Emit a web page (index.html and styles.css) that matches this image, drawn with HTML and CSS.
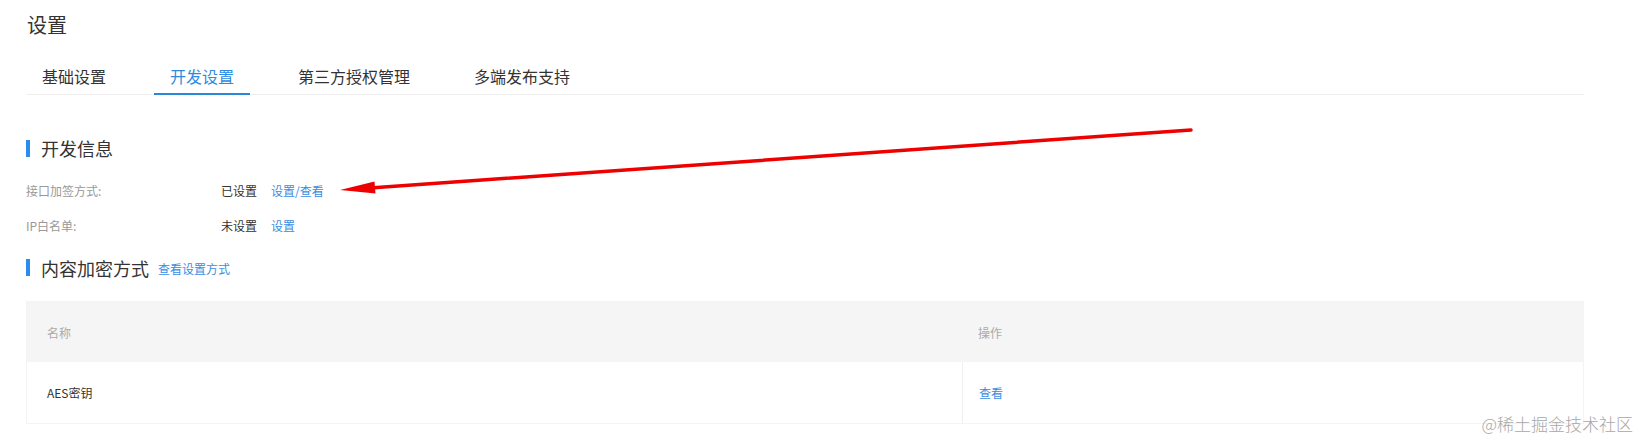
FILE: index.html
```html
<!DOCTYPE html>
<html lang="zh-CN">
<head>
<meta charset="utf-8">
<title>设置</title>
<link rel="stylesheet" href="styles.css">
</head>
<body>
<div class="page">
  <h1 class="title">设置</h1>
  <div class="tabs">
    <div class="tab">基础设置</div>
    <div class="tab active">开发设置</div>
    <div class="tab">第三方授权管理</div>
    <div class="tab">多端发布支持</div>
  </div>

  <div class="section-head first"><span class="section-title">开发信息</span></div>
  <div class="info-row">
    <span class="label">接口加签方式:</span>
    <span class="value">已设置</span>
    <a class="link">设置/查看</a>
  </div>
  <div class="info-row">
    <span class="label">IP白名单:</span>
    <span class="value">未设置</span>
    <a class="link">设置</a>
  </div>

  <div class="section-head second"><span class="section-title">内容加密方式</span><a class="link head-link">查看设置方式</a></div>

  <div class="table">
    <div class="thead">
      <div class="cell col-name">名称</div>
      <div class="cell col-op">操作</div>
    </div>
    <div class="trow">
      <div class="cell col-name">AES密钥</div>
      <div class="cell col-op"><a class="link">查看</a></div>
    </div>
  </div>
</div>

<svg class="annotation" width="1641" height="442" viewBox="0 0 1641 442" xmlns="http://www.w3.org/2000/svg">
  <line x1="1191" y1="130" x2="370" y2="188" stroke="#ee0000" stroke-width="3.5" stroke-linecap="round"/>
  <polygon points="340,190 374.5,181.5 375.5,193.5" fill="#ee0000"/>
</svg>

<div class="watermark">@稀土掘金技术社区</div>
</body>
</html>
```

FILE: styles.css
```css
* { box-sizing: border-box; }

html, body {
  margin: 0;
  padding: 0;
  background: #ffffff;
}

body {
  font-family: "Noto Sans CJK SC", "Microsoft YaHei", sans-serif;
  color: #333333;
  width: 1641px;
  height: 442px;
  overflow: hidden;
  position: relative;
}

.page {
  padding: 11px 57px 0 26px;
}

.title {
  margin: 0;
  font-size: 20px;
  font-weight: normal;
  line-height: 28px;
  color: #333333;
  padding-left: 1px;
}

.tabs {
  display: flex;
  margin-top: 16px;
  border-bottom: 1px solid #eeeeee;
}

.tab {
  font-size: 16px;
  line-height: 22px;
  padding: 10px 16px 6px;
  margin-right: 32px;
  border-bottom: 2px solid transparent;
  margin-bottom: -1px;
  color: #333333;
}

.tab.active {
  color: #2f8ae2;
  border-bottom-color: #2a88d8;
}

.section-head {
  display: flex;
  align-items: center;
  line-height: 24px;
}

.section-head::before {
  content: "";
  width: 4px;
  height: 17px;
  background: #2a8ceb;
  margin-right: 11px;
}

.section-head.first { margin-top: 41px; }
.section-head.second { margin-top: 18px; }

.section-title {
  font-size: 18px;
  color: #333333;
}

.head-link {
  font-size: 12px;
  margin-left: 9px;
  padding-top: 3px;
}

.info-row {
  display: flex;
  align-items: center;
  font-size: 12px;
  line-height: 20px;
  margin-top: 15px;
}

.section-head.first + .info-row { margin-top: 21px; }

.label {
  width: 195px;
  color: #999999;
}

.value {
  color: #333333;
  margin-right: 14px;
}

.link {
  color: #3b8ce0;
  cursor: pointer;
}

.table {
  margin-top: 20px;
  border: 1px solid #f4f4f4;
  font-size: 12px;
}

.thead {
  display: flex;
  height: 60px;
  align-items: center;
  background: #f5f5f5;
  color: #aaaaaa;
}

.trow {
  display: flex;
  height: 61px;
  align-items: center;
  color: #333333;
}

.cell {
  height: 100%;
  display: flex;
  align-items: center;
}

.col-name {
  width: 935px;
  padding-left: 20px;
}

.col-op {
  flex: 1;
  padding-left: 16px;
}

.trow .col-op {
  border-left: 1px solid #f0f0f0;
}

.annotation {
  position: absolute;
  left: 0;
  top: 0;
  pointer-events: none;
}

.watermark {
  position: absolute;
  right: 8px;
  top: 412px;
  font-size: 17px;
  line-height: 24px;
  color: #a8a8a8;
  font-weight: 300;
}
```
